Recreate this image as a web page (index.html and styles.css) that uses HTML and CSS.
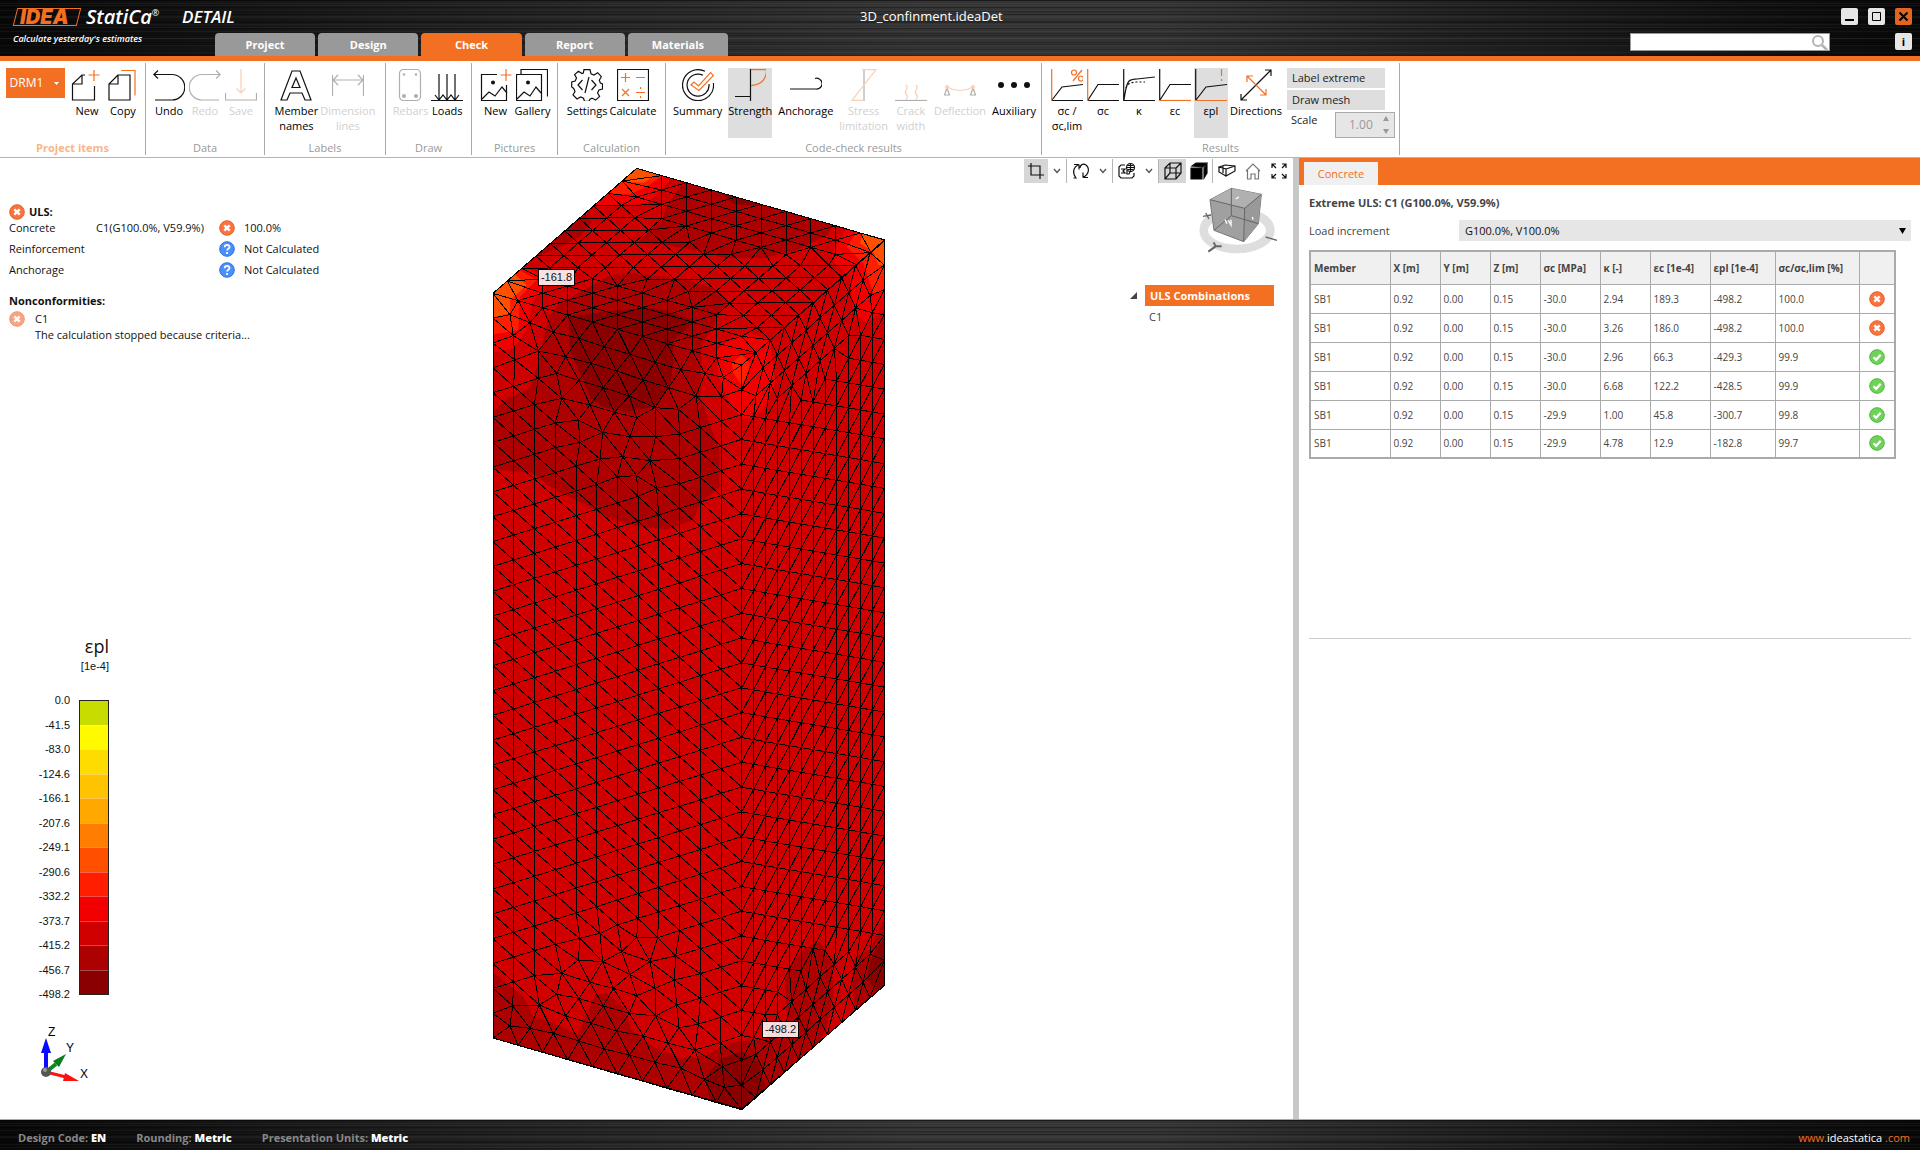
FILE: index.html
```html
<!DOCTYPE html>
<html lang="en">
<head>
    <meta charset="UTF-8" />
    <meta name="viewport" content="width=device-width, initial-scale=1.0"/>
    <title>3D_confinment.ideaDet</title>
    <link rel="stylesheet" href="styles.css">
</head>
<body>
    <!-- Shared status icons -->
    <svg class="defs" width="0" height="0" aria-hidden="true">
        <symbol id="ic-fail" viewBox="0 0 16 16"><circle cx="8" cy="8" r="7.3" fill="#f9733f" stroke="#e8602c"/><path d="M5.3 5.3l5.4 5.4M10.7 5.3l-5.4 5.4" stroke="#fff" stroke-width="2.4"/></symbol>
        <symbol id="ic-ask" viewBox="0 0 16 16"><circle cx="8" cy="8" r="7.3" fill="#4a8ffb" stroke="#2f6ee0"/><path d="M5.7 6.2c0-3 4.8-3 4.8-.2 0 1.700-2.400 1.700-2.400 3.500M8.100 11v2" stroke="#fff" stroke-width="1.800" fill="none"/></symbol>
        <symbol id="ic-ok" viewBox="0 0 16 16"><circle cx="8" cy="8" r="7.3" fill="#6fd35a" stroke="#4fb53c"/><path d="M4.500 8.200l2.600 2.600 4.600-5" stroke="#fff" stroke-width="2.200" fill="none"/></symbol>
        <symbol id="ic-down" viewBox="0 0 8 8"><path d="M1 2l3 3.500 3-3.500" fill="none" stroke="#555" stroke-width="1.400"/></symbol>
    </svg>

    <header class="top-bar">
        <div class="brand">
            <div class="brand-row">
                <span class="logo-box">IDEA</span>
                <span class="logo-name">StatiCa<sup>®</sup></span>
                <span class="logo-app">DETAIL</span>
            </div>
            <p class="tagline">Calculate yesterday's estimates</p>
        </div>
        <nav class="tabs">
            <button>Project</button>
            <button>Design</button>
            <button class="active">Check</button>
            <button>Report</button>
            <button>Materials</button>
        </nav>
        <h1>3D_confinment.ideaDet</h1>
        <div class="window-tools">
            <div class="window-buttons">
                <button aria-label="Minimize"><svg width="17" height="17"><path d="M4 12h9" stroke="#000" stroke-width="2"/></svg></button>
                <button aria-label="Maximize"><svg width="17" height="17"><path d="M4.500 4.500h8v8h-8z" stroke="#000" fill="none"/></svg></button>
                <button class="close" aria-label="Close"><svg width="17" height="17"><path d="M4.500 4.500l8 8M12.500 4.500l-8 8" stroke="#000" stroke-width="2"/></svg></button>
            </div>
            <div class="search-row">
                <div class="search">
                    <input type="text" aria-label="Search">
                    <svg width="18" height="18"><circle cx="7" cy="7" r="5" fill="none" stroke="#b4b4b4" stroke-width="2"/><path d="M11 11l5 5" stroke="#b4b4b4" stroke-width="2.500"/></svg>
                </div>
                <button class="info" aria-label="Info">i</button>
            </div>
        </div>
    </header>

    <div class="ribbon">
        <section class="group group-items">
            <div class="tools">
                <button class="item-select">DRM1 <svg width="8" height="6"><path d="M1 1h5L3.500 4z" fill="#fff"/></svg></button>
                <button class="tool"><svg class="icon" viewBox="0 0 32 32"><path d="M14 6H11L1.500 15v16h22V17M11 6v9H1.500"/><path class="o" d="M23 1v11M17.500 6h11"/></svg>New</button>
                <button class="tool"><svg class="icon" viewBox="0 0 32 32"><path d="M11 6L2 15v16h21V6zM11 6v9H2"/><path class="o" d="M14 1.500h14v25"/></svg>Copy</button>
            </div>
            <h2>Project items</h2>
        </section>
        <section class="group group-data">
            <div class="tools">
                <button class="tool"><svg class="icon" viewBox="0 0 32 32"><path d="M5 1.500L.8 5.500 5 9.500M1 5.500h18a12.500 12.500 0 0 1 0 25.500H2"/></svg>Undo</button>
                <button class="tool" disabled><svg class="icon" viewBox="0 0 32 32"><path d="M27 1.500l4.200 4-4.200 4M31 5.500H13a12.500 12.500 0 0 0 0 25.500h17"/></svg>Redo</button>
                <button class="tool" disabled><svg class="icon" viewBox="0 0 32 32"><path d="M.5 24v7h31v-7"/><path class="o" d="M16 0v24M11.500 19.500L16 24l4.500-4.500"/></svg>Save</button>
            </div>
            <h2>Data</h2>
        </section>
        <section class="group group-labels">
            <div class="tools">
                <button class="tool"><svg class="icon" viewBox="0 0 32 32"><path d="M12 2h8l11 29h-6l-3-7H10l-3 7H1zM16 9l-4 9.500h8z"/></svg>Member<br>names</button>
                <button class="tool" disabled><svg class="icon" viewBox="0 0 32 32"><path d="M.5 27V6M31.500 27V6M1 11h30M6 6l-5 5 5 5M26 6l5 5-5 5"/></svg>Dimension<br>lines</button>
            </div>
            <h2>Labels</h2>
        </section>
        <section class="group group-draw">
            <div class="tools">
                <button class="tool" disabled><svg class="icon" viewBox="0 0 32 32"><rect x="5.500" y=".5" width="21" height="31" rx="4"/><g class="fill"><circle cx="10" cy="5.500" r="1.200"/><circle cx="22" cy="5.500" r="1.200"/><circle cx="10" cy="27" r="2"/><circle cx="22" cy="27" r="2"/></g></svg>Rebars</button>
                <button class="tool"><svg class="icon" viewBox="0 0 32 32"><path d="M0 31.500h32M8 5v26M16 5v26M24 5v26M4 26l4 5 4-5 4 5 4-5 4 5 4-5"/></svg>Loads</button>
            </div>
            <h2>Draw</h2>
        </section>
        <section class="group group-pictures">
            <div class="tools">
                <button class="tool"><svg class="icon" viewBox="0 0 32 32"><path d="M17 5.500H1.500v26h25V16M2 30l7-7 6 4 7-9 5 6"/><circle class="fill" cx="13" cy="13.500" r="2"/><path class="o" d="M26 0v12M20.500 6h11"/></svg>New</button>
                <button class="tool"><svg class="icon" viewBox="0 0 32 32"><path d="M.5 5.500h25v26H.5zM5 5.500v-5h26.500v27M1 30l7-7 6 4 6-9 5 6"/><circle class="fill" cx="12" cy="13.500" r="2"/></svg>Gallery</button>
            </div>
            <h2>Pictures</h2>
        </section>
        <section class="group group-calc">
            <div class="tools">
                <button class="tool"><svg class="icon" viewBox="0 0 32 32"><path d="M13 .7h6l1 4 3 1.300 3.700-2.300 3.600 4-2 3.500L29.400 14l2.100 1v5l-3.600 1-1.300 3 2 3.500-4 3.600-3.600-2-2 1-1 2.200h-4.500l-1-3-3-1.300-3.500 2-4-4 2-3.500-1.300-3L.7 18v-5l3.500-1 1.300-3L3.600 5.600l3.800-3.400L11 4.600l1.300-.6z"/><path d="M11.500 11L7 16l4.500 5M20.500 11l4.500 5-4.500 5M18 8l-4 16"/></svg>Settings</button>
                <button class="tool"><svg class="icon" viewBox="0 0 32 32"><path d="M.5.5h31v31H.5z"/><path class="o" d="M4 8.500h9M8.500 4v9M19 8.500h9M5 20l7 7M12 20l-7 7M19 23.500h9M23.500 18v2M23.500 27v2"/></svg>Calculate</button>
            </div>
            <h2>Calculation</h2>
        </section>
        <section class="group group-check">
            <div class="tools">
                <button class="tool"><svg class="icon" viewBox="0 0 32 32"><path d="M23 2.300A15.500 15.500 0 1 0 31.400 14M21 6.300A11 11 0 1 0 27 15"/><path class="o" d="M9 16l3-3 4.500 4L28.500 3.500l3 3L17 21.500z"/></svg>Summary</button>
                <button class="tool active"><svg class="icon" viewBox="0 0 32 32"><path d="M16.500 0v32M1 27.500h15.500"/><path class="o" d="M17 .7h15.500c0 10-5 15-15.500 16"/></svg>Strength</button>
                <button class="tool"><svg class="icon" viewBox="0 0 32 32"><path d="M0 20h26a5.400 5.400 0 1 0-1-10.500"/></svg>Anchorage</button>
                <button class="tool" disabled><svg class="icon" viewBox="0 0 32 32"><path d="M16 1v31"/><path class="o" d="M14 .7h14L4 31.300h12"/></svg>Stress<br>limitation</button>
                <button class="tool" disabled><svg class="icon" viewBox="0 0 32 32"><path d="M0 31.500h32"/><path class="o" d="M11 16c4 4-3 6 0 9s0 5 0 6M21 16c4 4-3 6 0 9s0 5 0 6"/></svg>Crack<br>width</button>
                <button class="tool" disabled><svg class="icon" viewBox="0 0 32 32"><path d="M3 19l-2.500 7h5zM29 19l-2.500 7h5z"/><path class="o" d="M3 18q13 7 26 0"/><g class="o-fill"><circle cx="3" cy="18" r="2"/><circle cx="29" cy="18" r="2"/></g></svg>Deflection</button>
                <button class="tool"><svg class="icon" viewBox="0 0 32 32"><g class="fill"><circle cx="3" cy="16" r="3"/><circle cx="16" cy="16" r="3"/><circle cx="29" cy="16" r="3"/></g></svg>Auxiliary</button>
            </div>
            <h2>Code-check results</h2>
        </section>
        <section class="group group-results">
            <div class="tools">
                <button class="tool"><svg class="icon" viewBox="0 0 32 32"><path d="M1 31.500h31M1 31l10-13 21-2.500"/><path class="o" d="M.7 0v32M31 1l-9 11"/><circle class="o" cx="23" cy="3.500" r="2.500"/><circle class="o" cx="30" cy="9.500" r="2.500"/></svg>σc /<br>σc,lim</button>
                <button class="tool"><svg class="icon" viewBox="0 0 32 32"><path d="M1 31.500h31M1 31l10-15.500h21"/><path class="o" d="M.7 0v32"/></svg>σc</button>
                <button class="tool"><svg class="icon" viewBox="0 0 32 32"><path d="M.7 0v31.500H32M1 31C4 9 6 11 14 10l18-2"/><path stroke-dasharray="2 2" d="M3 19c2-6 6-5 10-6h9"/></svg>κ</button>
                <button class="tool"><svg class="icon" viewBox="0 0 32 32"><path d="M.7 0v31M1 31l10-15.500h21"/><path class="o" d="M0 31.500h32"/></svg>εc</button>
                <button class="tool active"><svg class="icon" viewBox="0 0 32 32"><path d="M.7 0v31M1 31l10-13 21-2.500"/><path class="o" d="M0 31.500h32M26.500 0v7M26.500 10v2"/></svg>εpl</button>
                <button class="tool"><svg class="icon" viewBox="0 0 32 32"><path d="M1 31L31 1M1 25v6h6M25 1h6v6"/><path class="o" d="M7 7l19 19M7 13V7h6M26 20v6h-6"/></svg>Directions</button>
                <div class="options">
                    <button class="option">Label extreme</button>
                    <button class="option">Draw mesh</button>
                    <div class="scale">
                        <label for="scale">Scale</label>
                        <span class="spinner">
                            <input id="scale" type="text" value="1.00" disabled>
                            <svg width="8" height="20"><path d="M1 6l3-5 3 5zM1 14l3 5 3-5z" fill="#999"/></svg>
                        </span>
                    </div>
                </div>
            </div>
            <h2>Results</h2>
        </section>
    </div>

    <main class="workspace">
        <div class="viewport">
            <div class="left-column">
                <div class="summary">
                    <h3><svg width="16" height="16"><use href="#ic-fail"/></svg>ULS:</h3>
                    <dl>
                        <dt>Concrete</dt><dd>C1(G100.0%, V59.9%)</dd><dd><svg width="16" height="16"><use href="#ic-fail"/></svg></dd><dd>100.0%</dd>
                        <dt>Reinforcement</dt><dd></dd><dd><svg width="16" height="16"><use href="#ic-ask"/></svg></dd><dd>Not Calculated</dd>
                        <dt>Anchorage</dt><dd></dd><dd><svg width="16" height="16"><use href="#ic-ask"/></svg></dd><dd>Not Calculated</dd>
                    </dl>
                    <h3>Nonconformities:</h3>
                    <div class="issue">
                        <svg width="16" height="16" opacity=".65"><use href="#ic-fail"/></svg>
                        <p>C1<br>The calculation stopped because criteria...</p>
                    </div>
                </div>

                <div class="legend">
                    <p class="legend-title">εpl</p>
                    <p class="legend-unit">[1e-4]</p>
                    <div class="legend-scale">
                        <ul class="legend-values">
                            <li>0.0</li><li>-41.5</li><li>-83.0</li><li>-124.6</li><li>-166.1</li><li>-207.6</li><li>-249.1</li>
                            <li>-290.6</li><li>-332.2</li><li>-373.7</li><li>-415.2</li><li>-456.7</li><li>-498.2</li>
                        </ul>
                        <div class="legend-bar">
                            <i class="c1"></i><i class="c2"></i><i class="c3"></i><i class="c4"></i><i class="c5"></i><i class="c6"></i>
                            <i class="c7"></i><i class="c8"></i><i class="c9"></i><i class="c10"></i><i class="c11"></i><i class="c12"></i>
                        </div>
                    </div>
                    <svg class="axes" width="60" height="66" viewBox="0 -6 60 66">
                        <path d="M12 44V20" stroke="#0a0aff" stroke-width="4"/><path d="M7 25l5-15 5 15z" fill="#0a0aff"/>
                        <path d="M12 44l10-8" stroke="#0a8a1a" stroke-width="4"/><path d="M19 33l13-7-7 13z" fill="#0a7a1a"/>
                        <path d="M12 44l20 5" stroke="#f11" stroke-width="3"/><path d="M31 45l14 8-16 0z" fill="#f11"/>
                        <circle cx="12" cy="44" r="5" fill="#555"/><circle cx="11" cy="42" r="2" fill="#999"/>
                        <text x="14" y="8">Z</text><text x="32" y="24">Y</text><text x="46" y="50">X</text>
                    </svg>
                </div>
            </div>

            <div class="model">
                <svg width="393" height="944" viewBox="36 51 1179 2832">
                    <clipPath id="body"><path d="M39 430L470 55 1213 270V2507L785 2877 39 2664z"/></clipPath>
                    <g clip-path="url(#body)">
                        <path fill="#d00000" d="M0 0h1300v2900H0z"/>
                        <g fill="#ad0000">
                            <path d="M560 170L615 90 1065 220 1040 255 950 300 850 325 740 325 640 300 550 285 475 275 500 250 545 210z"/>
                            <path d="M160 325L310 185 335 215 300 260 230 295z"/>
                            <path d="M240 460L330 410 390 375 460 370 600 385 700 415 745 450 720 490 700 530 665 580 665 640 660 740 700 850 718 900 718 1010 660 1060 640 1110 560 1138 480 1130 400 1110 330 1070 225 1020 160 970 30 955 30 800 80 745 150 715 175 640 205 500z"/>
                            <path d="M30 2460L75 2495 130 2540 160 2600 220 2620 295 2655 325 2580 345 2535 380 2530 430 2570 455 2640 520 2690 600 2725 680 2715 740 2680 850 2665 895 2640 930 2660 920 2580 915 2490 940 2430 975 2395 1020 2375 1055 2430 1060 2530 1040 2630 1000 2720 785 2900 30 2700z"/>
                            <path d="M1220 2290L1170 2400 1125 2420 1115 2500 1130 2600 1220 2520z"/>
                        </g>
                        <g fill="#8a0000">
                            <path d="M265 500L340 490 420 480 520 475 600 495 645 515 580 570 580 640 570 710 520 770 440 785 370 770 335 750 300 670 270 600z"/>
                            <path d="M720 125L830 160 835 168 760 162z"/>
                            <path d="M675 2785L720 2725 790 2705 840 2740 845 2780 870 2840 785 2900 690 2850z"/>
                            <path d="M1220 2350L1170 2430 1160 2490 1190 2520 1220 2500z"/>
                        </g>
                        <g fill="#f20000">
                            <path d="M340 170L470 40 575 85 545 120 500 160 430 165z"/>
                            <path d="M1220 260L1100 235 1060 300 1065 340 1110 380 1120 490 1160 520 1220 475z"/>
                            <path d="M30 430L125 345 215 390 160 450 140 540 100 595 30 610z"/>
                            <path d="M710 600L760 560 810 550 870 570 885 700 850 780 800 810 760 780 715 680z"/>
                        </g>
                        <g fill="#ff1e00">
                            <path d="M380 132L470 40 545 78 500 110 450 132z"/>
                            <path d="M1220 260L1135 240 1100 290 1150 340 1180 430 1220 420z"/>
                            <path d="M30 430L110 355 170 390 120 440 115 540 30 555z"/>
                            <path d="M755 640L785 615 810 640 800 680 785 705 760 670z"/>
                        </g>
                        <g fill="#ff5000">
                            <path d="M425 95L470 40 535 72 490 98z"/>
                            <path d="M1220 260L1150 250 1140 280 1180 305 1195 345 1220 345z"/>
                            <path d="M30 430L100 370 140 405 90 450 90 490 30 505z"/>
                        </g>
                    </g>
                    <path id="mesh" class="mesh" d=""/>
                    <path class="mesh" d="M39 430L470 55 1213 270V2507L785 2877 39 2664z"/>
                </svg>
                <span class="tag tag-max">-161.8</span>
                <span class="tag tag-min">-498.2</span>
            </div>

            <div class="right-column">
                <div class="view-bar">
                    <button class="crop active" aria-label="Crop"><svg width="18" height="18"><path d="M4 1v12h13M1 4h12v13" /></svg></button>
                    <button class="drop" aria-label="Crop options"><svg width="8" height="8"><use href="#ic-down"/></svg></button>
                    <button class="line" aria-label="Rotate"><svg width="18" height="18"><path d="M7 2.500H2M7 2.500v5M7 2.500C1 5 0 11 4 16H1.500M11 15.500h5M11 15.500v-5M11 15.500c6-3 7-9 3-12.500-3-2-6 0-6 3"/></svg></button>
                    <button class="drop" aria-label="Rotate options"><svg width="8" height="8"><use href="#ic-down"/></svg></button>
                    <button class="line" aria-label="3D view"><svg width="18" height="18"><path d="M7 3H3L1 5v9l2 2h11l2-2v-3M3 7h4l-2 2 2 2H3M9 8v4h2l1-2"/><circle cx="12.500" cy="5.500" r="4"/><path d="M12.500 1v9M8.500 5.500h8M9.500 3.500h6M9.500 7.500h6"/></svg></button>
                    <button class="drop" aria-label="3D view options"><svg width="8" height="8"><use href="#ic-down"/></svg></button>
                    <button class="line active" aria-label="Wireframe"><svg width="18" height="18"><path d="M1 6l5-5h11v10l-5 6H1zM1 6h11v11M12 6l5-5M6 1v10l-5 6M6 11h11"/></svg></button>
                    <button aria-label="Solid"><svg width="18" height="18"><path d="M1 6h11v11H1zM2 4l4-3h11l-4 4zM14 6l3-4v9l-3 5z" fill="#000"/></svg></button>
                    <button class="line" aria-label="Camera"><svg width="18" height="18"><path d="M1 5l6-2 10 1v5l-9 5V7zM1 5v5l7 4M8 7l9-3M1 5l7 2M5 4v7"/></svg></button>
                    <button aria-label="Home"><svg width="18" height="18"><path d="M2 9l7-7 7 7M3.500 8v9H7v-5h4v5h3.500V8" stroke="#777"/></svg></button>
                    <button aria-label="Fit"><svg width="18" height="18"><path d="M2 6V2h4M2 2l4 4M12 2h4v4M16 2l-4 4M2 12v4h4M2 16l4-4M16 12v4h-4M16 16l-4-4"/></svg></button>
                </div>
                <svg class="nav-cube" width="80" height="68" viewBox="0 0 240 204">
                    <ellipse cx="114" cy="130" rx="100" ry="56" fill="none" stroke="#dedede" stroke-width="26"/>
                    <path d="M33 38L97 4 187 22 178 110 134 164 45 130z" fill="#a0a0a0" stroke="#777" stroke-width="3"/>
                    <path d="M33 38l104 26 50-42L97 4z" fill="#b0b0b0"/><path d="M137 64l50-42-9 88-44 54z" fill="#999"/>
                    <path d="M33 38l104 26 50-42M137 64l-3 100M97 4v82l-52 44M97 86l81 24" fill="none" stroke="#666" stroke-width="3"/>
                    <path d="M110 36l10-6M78 98l6 12M88 100l8 14 0-16M160 90l2 8" stroke="#fff" stroke-width="4" fill="none"/>
                    <path d="M28 194l22-16 18 0M50 178l-6-12" stroke="#666" stroke-width="6" fill="none"/>
                    <path d="M12 88l24-4M20 78l10 18M200 150l34 10" stroke="#666" stroke-width="4"/>
                </svg>
                <details class="combos" open>
                    <summary><svg width="8" height="8"><path d="M7 0v7H0z" fill="#444"/></svg><b>ULS Combinations</b></summary>
                    <p>C1</p>
                </details>
            </div>
        </div>

        <aside class="panel">
            <div class="panel-tabs"><button>Concrete</button></div>
            <div class="panel-body">
                <h3>Extreme ULS: C1 (G100.0%, V59.9%)</h3>
                <div class="field">
                    <label for="increment">Load increment</label>
                    <div class="select">
                        <select id="increment"><option>G100.0%, V100.0%</option></select>
                        <svg width="8" height="6"><path d="M0 0h7L3.500 6z"/></svg>
                    </div>
                </div>
                <table>
                    <thead>
                        <tr><th class="w-member">Member</th><th class="w-s">X [m]</th><th class="w-s">Y [m]</th><th class="w-s">Z [m]</th><th class="w-m">σc [MPa]</th><th class="w-s">κ [-]</th><th class="w-m">εc [1e-4]</th><th class="w-l">εpl [1e-4]</th><th class="w-xl">σc/σc,lim [%]</th><th class="w-icon"></th></tr>
                    </thead>
                    <tbody>
                        <tr><td>SB1</td><td>0.92</td><td>0.00</td><td>0.15</td><td>-30.0</td><td>2.94</td><td>189.3</td><td>-498.2</td><td>100.0</td><td><svg width="16" height="16"><use href="#ic-fail"/></svg></td></tr>
                        <tr><td>SB1</td><td>0.92</td><td>0.00</td><td>0.15</td><td>-30.0</td><td>3.26</td><td>186.0</td><td>-498.2</td><td>100.0</td><td><svg width="16" height="16"><use href="#ic-fail"/></svg></td></tr>
                        <tr><td>SB1</td><td>0.92</td><td>0.00</td><td>0.15</td><td>-30.0</td><td>2.96</td><td>66.3</td><td>-429.3</td><td>99.9</td><td><svg width="16" height="16"><use href="#ic-ok"/></svg></td></tr>
                        <tr><td>SB1</td><td>0.92</td><td>0.00</td><td>0.15</td><td>-30.0</td><td>6.68</td><td>122.2</td><td>-428.5</td><td>99.9</td><td><svg width="16" height="16"><use href="#ic-ok"/></svg></td></tr>
                        <tr><td>SB1</td><td>0.92</td><td>0.00</td><td>0.15</td><td>-29.9</td><td>1.00</td><td>45.8</td><td>-300.7</td><td>99.8</td><td><svg width="16" height="16"><use href="#ic-ok"/></svg></td></tr>
                        <tr><td>SB1</td><td>0.92</td><td>0.00</td><td>0.15</td><td>-29.9</td><td>4.78</td><td>12.9</td><td>-182.8</td><td>99.7</td><td><svg width="16" height="16"><use href="#ic-ok"/></svg></td></tr>
                    </tbody>
                </table>
                <hr>
            </div>
        </aside>
    </main>

    <footer>
        <span>Design Code: <b>EN</b></span>
        <span>Rounding: <b>Metric</b></span>
        <span>Presentation Units: <b>Metric</b></span>
        <a href="#">www.<b>ideastatica</b> .com</a>
    </footer>

    <script src="mesh.js"></script>
</body>
</html>
```
FILE: mesh.js
```js
// Each face: origin, unit vector along the edge, unit vector across, size in elements
const faces = [
    {
        o: [39, 430], u: [74.6, 21.5], v: [0, 74.47], n: 10, m: 30,
        nodes: [
            [90,494],[150,518],[220,547],[297,565],[373,590],[450,613],[525,637],[603,659],[675,670],[730,682],
            [100,557],[175,603],[257,620],[333,640],[410,663],[490,690],[565,713],[648,738],[725,740],
            [105,630],[175,685],[230,670],[297,692],[370,713],[448,738],[525,773],[595,778],
            [245,745],[330,765],[403,787],[470,803],[295,810],[368,847],[450,860],[527,860],
            [300,877],[360,927],[428,920],[510,932],[412,980],[470,977],[530,1015],
            [90,2628],[150,2635],[220,2650],[297,2673],[373,2697],[448,2715],[525,2737],[603,2755],[673,2788],[733,2812],
            [98,2567],[178,2565],[257,2598],[333,2620],[410,2643],[490,2658],[565,2680],[645,2700],[727,2750],
            [230,2533],[297,2545],[370,2568],[448,2590],[527,2598],[597,2633],[655,2623],[720,2678],
            [245,2470],[330,2497],[400,2515],[470,2537],[295,2430],[368,2435],[450,2473],[525,2515],[590,2565],
            [300,2365],[360,2350],[425,2405],[510,2435],[583,2490],[470,2363],[533,2363],[587,2418],[412,2325]
        ]
    },
    { o: [785, 645], u: [42.8, -37.5], v: [0, 74.5], n: 10, m: 30, nodes: [], rows: 3 },
    { o: [39, 430], u: [74.6, 21.5], v: [43.1, -37.5], n: 10, m: 10, nodes: [], rows: 3 }
];

function faceNodes(f) {
    const pts = [];
    const add = (x, y, gap) => {
        if (pts.every(p => Math.hypot(p[0] - x, p[1] - y) > gap)) pts.push([x, y]);
    };
    for (let i = 0; i <= f.n; i++) { add(i, 0, 0.1); add(i, f.m, 0.1); }
    for (let j = 1; j < f.m; j++) { add(0, j, 0.1); add(f.n, j, 0.1); }
    const det = f.u[0] * f.v[1] - f.u[1] * f.v[0];
    f.nodes.forEach(([px, py]) => {
        const dx = px - f.o[0], dy = py - f.o[1];
        add((dx * f.v[1] - dy * f.v[0]) / det, (dy * f.u[0] - dx * f.u[1]) / det, 0.4);
    });
    // rows following the short edges
    for (let k = 1; k <= (f.rows || 0); k++) {
        const inset = k > 1 ? k - 1 : 0.5;
        for (let x = (k % 2) / 2; x < f.n; x++) {
            if (x < inset || x > f.n - inset) continue;
            add(x, k * 0.866, 0.7);
            add(x, f.m - k * 0.866, 0.7);
        }
    }
    // regular columns
    for (let i = 1; i < 12; i++) {
        for (let y = (i % 2) / 2; y < f.m; y++) {
            if (y > 0.6 && y < f.m - 0.6) add(i * f.n / 12, y, 0.7);
        }
    }
    return pts;
}

function circle(a, b, c) {
    const d = 2 * (a[0] * (b[1] - c[1]) + b[0] * (c[1] - a[1]) + c[0] * (a[1] - b[1]));
    const A = a[0] ** 2 + a[1] ** 2, B = b[0] ** 2 + b[1] ** 2, C = c[0] ** 2 + c[1] ** 2;
    const x = (A * (b[1] - c[1]) + B * (c[1] - a[1]) + C * (a[1] - b[1])) / d;
    const y = (A * (c[0] - b[0]) + B * (a[0] - c[0]) + C * (b[0] - a[0])) / d;
    return { x, y, r: (x - a[0]) ** 2 + (y - a[1]) ** 2 };
}

// Bowyer-Watson, returns unique edges
function triangulate(points) {
    const n = points.length;
    const p = points.concat([[-900, -800], [950, -850], [20, 1300]]);
    let tris = [{ t: [n, n + 1, n + 2], c: circle(p[n], p[n + 1], p[n + 2]) }];
    for (let i = 0; i < n; i++) {
        const count = {};
        tris = tris.filter(({ t, c }) => {
            if ((p[i][0] - c.x) ** 2 + (p[i][1] - c.y) ** 2 >= c.r - 1e-9) return true;
            [[t[0], t[1]], [t[1], t[2]], [t[2], t[0]]].forEach(e => {
                const key = Math.min(...e) + '_' + Math.max(...e);
                count[key] = (count[key] || 0) + 1;
            });
            return false;
        });
        Object.keys(count).filter(k => count[k] === 1).forEach(k => {
            const [a, b] = k.split('_').map(Number);
            const area = (p[b][0] - p[a][0]) * (p[i][1] - p[a][1]) - (p[b][1] - p[a][1]) * (p[i][0] - p[a][0]);
            if (Math.abs(area) > 1e-9) tris.push({ t: [a, b, i], c: circle(p[a], p[b], p[i]) });
        });
    }
    const edges = new Set();
    tris.forEach(({ t }) => {
        [[t[0], t[1]], [t[1], t[2]], [t[2], t[0]]].forEach(e => {
            if (Math.max(...e) < n) edges.add(Math.min(...e) + '_' + Math.max(...e));
        });
    });
    return [...edges].map(k => k.split('_').map(Number));
}

let d = '';
faces.forEach(f => {
    const pts = faceNodes(f);
    const pos = ([x, y]) =>
        Math.round(f.o[0] + x * f.u[0] + y * f.v[0]) + ' ' + Math.round(f.o[1] + x * f.u[1] + y * f.v[1]);
    triangulate(pts).forEach(([a, b]) => {
        d += 'M' + pos(pts[a]) + 'L' + pos(pts[b]);
    });
});
document.getElementById('mesh').setAttribute('d', d);
```
FILE: styles.css
```css
:root {
    --orange: #f36f21;
    --grey: #dedede;
    --line: #b4b4b4;
    --text: #444;
}

* {
    box-sizing: border-box;
}

body {
    margin: 0;
    min-height: 100vh;
    display: flex;
    flex-direction: column;
    background: #fff;
    color: #111;
    font-family: "Open Sans", "Noto Sans", sans-serif;
    font-size: 11px;
    line-height: 16px;
}

h1, h2, h3, p, ul, dl, dd {
    margin: 0;
    padding: 0;
    font-size: inherit;
}

button, input, select {
    font: inherit;
    color: inherit;
    border: none;
    padding: 0;
    margin: 0;
    background: none;
}

button {
    cursor: pointer;
}

.defs {
    position: absolute;
}

/* Header */
.top-bar, footer {
    background:
        repeating-linear-gradient(180deg, rgba(0,0,0,0.3) 0 1px, transparent 1px 3px, rgba(255,255,255,0.04) 3px 4px, transparent 4px 7px),
        repeating-linear-gradient(180deg, rgba(0,0,0,0.25) 0 1px, transparent 1px 5px, rgba(255,255,255,0.04) 5px 6px, transparent 6px 11px),
        linear-gradient(90deg, #080808, #1c1c1c 20%, #343434 48%, #343434 60%, #222 75%, #080808);
}

.top-bar {
    height: 61px;
    border-bottom: 5px solid var(--orange);
    display: grid;
    grid-template-columns: 215px 513px 1fr 290px;
    color: #fff;
}

.brand {
    padding: 7px 0 0 13px;
    white-space: nowrap;
    font-style: italic;
}

.brand-row {
    display: flex;
    align-items: center;
    height: 19px;
    font-weight: 600;
    font-size: 17px;
}

.logo-box {
    position: relative;
    flex: none;
    width: 68px;
    padding-left: 7px;
    color: var(--orange);
    font: italic 900 20px/18px "Inter", sans-serif;
}

.logo-box::before {
    content: "";
    position: absolute;
    inset: 0 2px;
    border: 1px solid var(--orange);
    transform: skewX(-14deg);
}

.logo-name {
    flex: none;
    margin-left: 5px;
    width: 96px;
    font-size: 20px;
}

.logo-name sup {
    font-size: 9px;
    font-weight: 400;
    line-height: 9px;
}

.tagline {
    margin-top: 5px;
    font-weight: 600;
    font-size: 9px;
}

.tabs {
    display: flex;
    align-items: flex-end;
    gap: 3px;
}

.tabs button {
    flex: 1;
    height: 23px;
    border-radius: 4px 4px 0 0;
    background: #999;
    font-weight: 700;
}

.tabs button.active {
    background: var(--orange);
}

.top-bar h1 {
    padding: 7px 0 0 132px;
    font-weight: 400;
    font-size: 13px;
    line-height: 18px;
}

.window-tools {
    display: flex;
    flex-direction: column;
    gap: 8px;
    padding: 8px 8px 0 0;
}

.window-buttons {
    display: flex;
    justify-content: flex-end;
    gap: 10px;
}

.window-buttons button, .info {
    width: 17px;
    height: 17px;
    border-radius: 2px;
    background: #e6e6e6;
    color: #000;
    font-weight: 700;
    line-height: 17px;
}

.window-buttons svg {
    display: block;
}

.window-buttons .close {
    background: #e2651f;
}

.search-row {
    display: flex;
    justify-content: space-between;
}

.search {
    display: flex;
    width: 200px;
    height: 18px;
    background: #fff;
    border: 1px solid #999;
}

.search input {
    flex: 1;
    min-width: 0;
}

/* Ribbon */
.ribbon {
    display: flex;
    height: 97px;
    padding-top: 2px;
    border-bottom: 1px solid var(--line);
}

.group {
    display: flex;
    flex-direction: column;
    justify-content: space-between;
    height: 92px;
    border-right: 1px solid #aaa;
    flex: none;
}

.group h2 {
    color: #999;
    font-weight: 400;
    text-align: center;
    line-height: 14px;
}

.group-items h2 {
    color: #f9b48c;
    font-weight: 700;
}

.tools {
    display: flex;
    justify-content: center;
    gap: 2px;
    padding-top: 5px;
}

.tool {
    display: flex;
    flex-direction: column;
    align-items: center;
    min-width: 34px;
    height: 70px;
    color: #000;
    line-height: 15px;
    white-space: nowrap;
}

.tool.active {
    background: var(--grey);
}

.tool:disabled {
    color: #d0d0d0;
}

.icon {
    width: 32px;
    height: 32px;
    margin: 1px 0 2px;
    flex: none;
    fill: none;
    stroke: #111;
    stroke-width: 1.2;
}

.icon .o {
    stroke: var(--orange);
}

.icon .fill {
    fill: #111;
    stroke: none;
}

.icon .o-fill {
    fill: var(--orange);
    stroke: none;
}

.tool:disabled .icon {
    opacity: 0.33;
}

.item-select {
    width: 59px;
    height: 30px;
    background: var(--orange);
    color: #fff;
    font-size: 12px;
    margin-right: 3px;
}

.item-select svg {
    margin-left: 7px;
    vertical-align: middle;
}

.group-items { width: 146px; }
.group-data { width: 119px; }
.group-labels { width: 121px; }
.group-draw { width: 86px; }
.group-pictures { width: 86px; }
.group-calc { width: 108px; }
.group-check { width: 376px; }
.group-results { width: 358px; }

.group-items .tools {
    justify-content: flex-start;
    padding-left: 6px;
}

.group-check .tools {
    justify-content: space-between;
    padding-left: 7px;
    padding-right: 5px;
}

.group-results .tools {
    justify-content: flex-start;
    padding-left: 8px;
}

.options {
    display: flex;
    flex-direction: column;
    gap: 2px;
    width: 108px;
    margin-left: auto;
    margin-right: 4px;
    color: #222;
}

.option {
    width: 98px;
    height: 20px;
    padding-left: 5px;
    background: var(--grey);
    text-align: left;
}

.scale {
    display: flex;
    justify-content: space-between;
    padding-left: 4px;
}

.spinner {
    display: flex;
    align-items: center;
    width: 60px;
    height: 26px;
    padding-right: 4px;
    background: #e6e6e6;
    border: 1px solid #aaa;
    color: #999;
}

.spinner input {
    width: 46px;
    padding-left: 13px;
    font-size: 12px;
}

/* Workspace */
.workspace {
    flex: 1;
    display: flex;
}

.viewport {
    flex: 1;
    display: grid;
    grid-template-columns: 492px 393px 1fr;
}

.left-column {
    display: flex;
    flex-direction: column;
    padding: 46px 0 0 9px;
}

.summary h3 {
    display: flex;
    align-items: center;
    gap: 4px;
    font-weight: 700;
}

.summary dl {
    display: grid;
    grid-template-columns: 87px 123px 25px 1fr;
    row-gap: 5px;
    margin-bottom: 15px;
}

.summary dt, .summary dd {
    height: 16px;
}

.issue {
    display: flex;
    gap: 10px;
    margin-top: 2px;
}

.legend {
    width: 100px;
    margin-top: 291px;
    text-align: right;
    font-family: "Liberation Sans", Arial, sans-serif;
}

.legend-title {
    font: 18px/24px "Open Sans", sans-serif;
}

.legend-scale {
    display: flex;
    justify-content: flex-end;
    gap: 9px;
    margin-top: 26px;
}

.legend-values {
    display: flex;
    flex-direction: column;
    justify-content: space-between;
    height: 310px;
    margin-top: -8px;
    list-style: none;
}

.legend-bar {
    display: flex;
    flex-direction: column;
    width: 30px;
    height: 295px;
    border: 1px solid #222;
}

.legend-bar i {
    flex: 1;
}

.legend-bar i + i {
    border-top: 1px solid rgba(255,255,255,0.3);
}

.c1 { background: #c8dc00; }
.c2 { background: #fffa00; }
.c3 { background: #ffdc00; }
.c4 { background: #ffc300; }
.c5 { background: #ffa800; }
.c6 { background: #ff7d00; }
.c7 { background: #ff5000; }
.c8 { background: #ff1e00; }
.c9 { background: #f20000; }
.c10 { background: #d00000; }
.c11 { background: #ad0000; }
.c12 { background: #8a0000; }

.axes {
    display: block;
    margin: 20px 0 0 25px;
    font-size: 12px;
}

.model {
    position: relative;
    padding-top: 9px;
}

.model svg {
    display: block;
}

.mesh {
    fill: none;
    stroke: #000;
    stroke-width: 3;
    shape-rendering: crispEdges;
}

/* Extreme value labels over the model */
.tag {
    position: absolute;
    width: 37px;
    height: 17px;
    border: 1px solid #000;
    background: rgba(255,255,255,0.88);
    font: 11px/15px "Liberation Sans", Arial, sans-serif;
    text-align: center;
}

.tag-max {
    left: 46px;
    top: 111px;
}

.tag-min {
    left: 270px;
    top: 863px;
}

.right-column {
    display: flex;
    flex-direction: column;
    align-items: flex-end;
}

.view-bar {
    display: flex;
    align-items: center;
    height: 26px;
    padding-right: 1px;
}

.view-bar button {
    display: flex;
    align-items: center;
    justify-content: center;
    width: 26px;
    height: 24px;
}

.view-bar .crop {
    width: 24px;
}

.view-bar .drop {
    width: 18px;
}

.view-bar .line {
    border-left: 1px solid var(--line);
    width: 28px;
}

.view-bar .active {
    background: #d6d6d6;
}

.view-bar svg {
    fill: none;
    stroke: #111;
    stroke-width: 1.2;
}

.nav-cube {
    margin: 3px 14px 0 0;
}

.combos {
    width: 144px;
    margin: 30px 19px 0 0;
    color: var(--text);
}

.combos summary {
    display: flex;
    align-items: center;
    gap: 7px;
    list-style: none;
}

.combos b {
    flex: 1;
    padding: 0 5px;
    background: var(--orange);
    color: #fff;
    font-weight: 700;
    line-height: 21px;
}

.combos p {
    padding: 3px 0 0 19px;
}

/* Result panel */
.panel {
    width: 627px;
    border-left: 6px solid #c8c8c8;
    color: var(--text);
}

.panel-tabs {
    height: 27px;
    padding: 4px 0 0 5px;
    background: var(--orange);
}

.panel-tabs button {
    width: 74px;
    height: 23px;
    background: #f0f0f0;
    color: var(--orange);
}

.panel-body {
    padding: 10px 9px 0 10px;
}

.panel-body h3 {
    font-weight: 700;
}

.field {
    display: flex;
    align-items: center;
    margin: 9px 0 9px;
}

.field label {
    width: 150px;
}

.select {
    position: relative;
    flex: 1;
}

.select select {
    width: 100%;
    height: 21px;
    padding: 0 6px;
    appearance: none;
    background: #e6e6e6;
    color: #111;
}

.select svg {
    position: absolute;
    right: 4px;
    top: 8px;
}

table {
    border-collapse: collapse;
    border: 2px solid #aaa;
    table-layout: fixed;
    width: 587px;
}

th, td {
    height: 29px;
    padding: 0 0 0 3px;
    border: 1px solid #aaa;
    text-align: left;
    white-space: nowrap;
    font-size: 10px;
}

th {
    height: 33px;
    background: #f0f0f0;
    font-weight: 700;
}

td:last-child {
    padding-left: 9px;
}

td svg {
    display: block;
}

.w-member { width: 80px; }
.w-s { width: 50px; }
.w-m { width: 60px; }
.w-l { width: 65px; }
.w-xl { width: 84px; }
.w-icon { width: 36px; }

hr {
    margin: 179px 0 0;
    border: none;
    border-top: 1px solid #ccc;
}

footer {
    display: flex;
    align-items: center;
    gap: 30px;
    height: 31px;
    padding: 5px 10px 0 18px;
    border-top: 1px solid #aaa;
    color: #888;
    font-weight: 700;
}

footer b {
    color: #fff;
}

footer a {
    margin-left: auto;
    color: var(--orange);
    font-weight: 400;
    text-decoration: none;
}

footer a b {
    font-weight: 400;
}
```
